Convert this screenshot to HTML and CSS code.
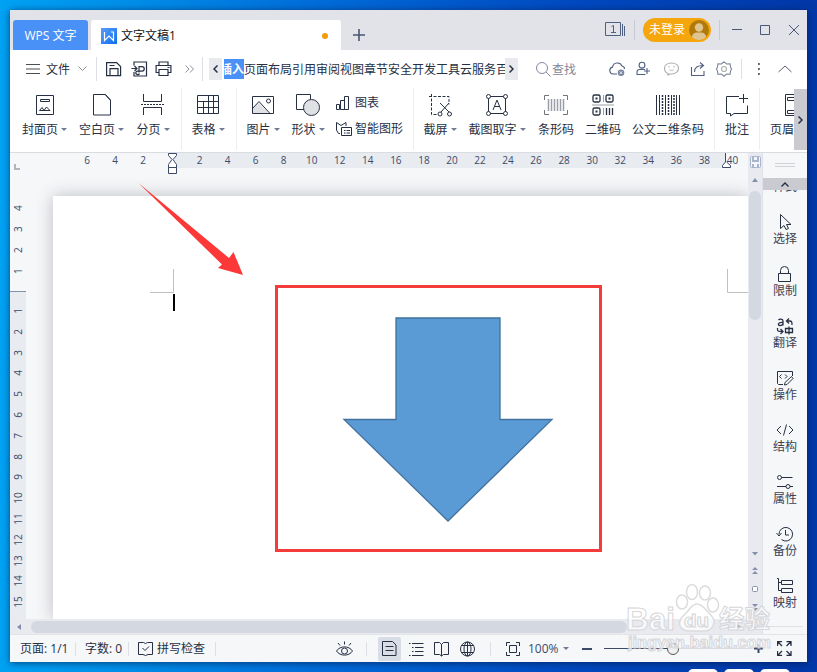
FILE: index.html
```html
<!DOCTYPE html>
<html lang="zh-CN">
<head>
  <meta charset="UTF-8">
  <meta name="viewport" content="width=device-width, initial-scale=1.0">
  <title>文字文稿1 - WPS 文字</title>
  <link rel="stylesheet" href="styles.css">
</head>
<body>
  <div class="dock"><i></i><i></i><i></i></div>
  <div class="window">

    <!-- Title bar -->
    <div class="titlebar">
      <div class="tab-home">WPS 文字</div>
      <div class="tab-doc">
        <svg width="16" height="16" viewBox="0 0 16 16"><defs><linearGradient id="lg" x1="0" y1="0" x2="1" y2="1"><stop offset="0" stop-color="#5b9cf8"/><stop offset="1" stop-color="#0d6ff0"/></linearGradient></defs><rect width="16" height="16" fill="url(#lg)"/><path d="M3.500 4v8.500L8 8l4.500 4.500V4H10" fill="none" stroke="#fff" stroke-width="1.200"/></svg>
        <span>文字文稿1</span>
        <i class="dot"></i>
      </div>
      <svg class="plus" width="12" height="12" viewBox="0 0 12 12"><path d="M6 0v12M0 6h12" stroke="#4a5570" stroke-width="1.600"/></svg>
      <div class="title-right">
        <svg width="21" height="15" viewBox="0 0 21 15" fill="none" stroke="#506080"><path d="M.5.500h15v13H.5zM17.500 2v12M19.500 4v10"/><path d="M6.500 4.500l2-1v7M6 10.500h5"/></svg>
        <i class="vline tall"></i>
        <div class="login"><span>未登录</span>
          <svg width="20" height="20" viewBox="0 0 20 20"><circle cx="10" cy="10" r="10" fill="#b07908"/><circle cx="10" cy="7.500" r="4.200" fill="#dfc48f"/><path d="M2.800 17c.4-3 2.700-4.500 4.700-4.500h5c2 0 4.300 1.500 4.700 4.500A10 10 0 0 1 2.800 17z" fill="#dfc48f"/></svg>
        </div>
        <i class="vline tall"></i>
        <svg class="winbtns" width="68" height="12" viewBox="0 0 68 12" fill="none" stroke="#47587a"><path d="M0 5.500h10M28.500 1.500h9v9h-9zM57 1l10 10M67 1L57 11"/></svg>
      </div>
    </div>

    <!-- Menu row -->
    <div class="menubar">
      <svg class="burger" width="14" height="10" viewBox="0 0 14 10"><path d="M0 .5h14M0 5h14M0 9.500h14" stroke="#4d4d55"/></svg>
      <span class="file">文件</span>
      <svg class="chev" width="9" height="6" viewBox="0 0 9 6" fill="none" stroke="#8b8f98"><path d="M.5.500l4 4 4-4"/></svg>
      <i class="vline"></i>
      <svg class="quick" width="66" height="16" viewBox="0 0 66 16" fill="none" stroke="#273043" stroke-width="1.200">
        <path d="M.6 1.600h10l4 4v9H.6zM4 14.500V7.600h8v7M3.500 4.500h5"/>
        <path d="M28 4.500V1h12.500v14H28v-4M25.500 7.500h5M28.500 5l2.500 2.500-2.500 2.500M33 11.500V5.600h3a2 2 0 0 1 0 4.500h-4a2 1.700 0 1 0 1.500 2.500"/>
        <path d="M53 4.500V1h9v3.500M52.500 11.500h-2.400v-7h14.800v7h-2.400M53 8.500h9v6h-9zM61.500 6.500h2"/>
      </svg>
      <svg class="more" width="9" height="8" viewBox="0 0 9 8" fill="none" stroke="#8b8f98"><path d="M.5.500L4 4 .5 7.500M5 .500L8.500 4 5 7.500"/></svg>
      <i class="vline"></i>
      <div class="scroll-left"><svg width="5" height="8" viewBox="0 0 5 8" fill="none" stroke="#273043" stroke-width="1.500"><path d="M4.500.500L1 4l3.500 3.500"/></svg></div>
      <div class="menu-active"><b>插入</b></div>
      <div class="menus"><span>页面布局</span><span>引用</span><span>审阅</span><span>视图</span><span>章节</span><span>安全</span><span>开发工具</span><span>云服务</span><span>百</span></div>
      <div class="scroll-right"><svg width="5" height="8" viewBox="0 0 5 8" fill="none" stroke="#273043" stroke-width="1.500"><path d="M.5.500L4 4 .5 7.500"/></svg></div>
      <svg class="search" width="15" height="15" viewBox="0 0 15 15" fill="none" stroke="#80889a"><circle cx="6" cy="6" r="5.500"/><path d="M10 10l4.500 4.500"/></svg>
      <span class="find">查找</span>
      <svg class="tools" width="124" height="16" viewBox="0 0 124 16" fill="none" stroke="#506080" stroke-width="1.100">
        <path d="M8 13H4a3.500 3.500 0 0 1-.5-6.900A5 5 0 0 1 13 5a3 3 0 0 1 2.500 3"/><circle cx="12" cy="11.700" r="3.300" fill="#7a86a0" stroke="none"/><path d="M10.700 10.400l2.600 2.600m0-2.600l-2.600 2.600" stroke="#fff" stroke-width=".8"/>
        <circle cx="33" cy="4.200" r="2.900"/><path d="M36 8.500h-5.500a2.500 2.500 0 0 0-2.500 2.500v2.500h8.500M38 7v6M35 10h6"/>
        <path d="M59 12.500c-2-.8-3.500-2.800-3.500-5C55.500 4 58.500 2 62.500 2S69.500 4 69.500 7.200 66.500 13 62.500 13h-1.500l-2 1z" stroke="#aaa"/><path d="M60 4.800v1.700M65 4.800v1.700M60.500 8.700c1 1 3 1 4 0" stroke="#aaa" stroke-width=".9"/>
        <path d="M82.500 6v8.500h12.500v-4.500M85.500 11c0-4.500 3-6.500 8.500-6.500M91 1.500l3.500 3-3.500 3"/>
        <path d="M115 .8l2.600 2.200 3.500-.2.500 3.600 1 1.600-1 1.600-.5 3.600-3.500-.2L115 15.200l-2.600-2.200-3.500.2-.5-3.600-1-1.600 1-1.600.5-3.600 3.500.2z" stroke="#7d8798"/><circle cx="115" cy="8" r="2.500" stroke="#aaa"/>
      </svg>
      <i class="vline v-last"></i>
      <svg class="kebab" width="28" height="12" viewBox="0 0 28 12"><path d="M0 0h1.800v2H0zM0 5h1.800v2H0zM0 10h1.800v2H0z" fill="#59606e"/><path d="M20.500 9l6.500-6 6.500 6" fill="none" stroke="#59606e"/></svg>
    </div>

    <!-- Ribbon -->
    <div class="ribbon">
      <div class="cmd w57"><svg width="24" height="24" viewBox="0 0 24 24"><path class="s" d="M3.500 2.500h17v19h-17zM7.500 6.500h9v2h-9z"/><path class="s" d="M6.500 17.500l2.500-3 2 3 2.500-3.500 3.500 3.500z"/></svg><span>封面页<em></em></span></div>
      <div class="cmd w57"><svg width="24" height="24" viewBox="0 0 24 24"><path class="s" d="M3.500 1.500h12l5 5.500v15h-17zM15 1.500l5.500 6"/></svg><span>空白页<em></em></span></div>
      <div class="cmd w46"><svg width="24" height="24" viewBox="0 0 24 24"><path class="s" d="M2.500 1v7.500h18V1M2.500 22v-7.500h18V22"/><path class="s" d="M0 11.500h23" stroke-dasharray="2 1"/></svg><span>分页<em></em></span></div>
      <i class="sep s5"></i>
      <div class="cmd w46"><svg width="24" height="24" viewBox="0 0 24 24"><path class="s" d="M1.500 2.500h21v18h-21zM1.500 8.500h21M1.500 14.500h21M7.500 8.500v12M12.500 2.500v18M17.500 2.500v18"/></svg><span>表格<em></em></span></div>
      <i class="sep s5"></i>
      <div class="cmd w46"><svg width="24" height="24" viewBox="0 0 24 24"><path d="M1.500 15.500l6-6 9 9v2h-15z" fill="#dfe1e5"/><path class="s" d="M1.500 3.500h21v17h-21zM1.500 15.500l6.500-7L19 20.500"/><circle class="s" cx="17.500" cy="8" r="2"/></svg><span>图片<em></em></span></div>
      <div class="cmd w44"><svg width="24" height="24" viewBox="0 0 24 24"><path class="s" d="M.5 1.500h14v15H.5z"/><circle class="s tint" cx="15.500" cy="14.500" r="8"/></svg><span>形状<em></em></span></div>
      <div class="stack">
        <div><svg width="16" height="16" viewBox="0 0 16 16"><path class="s" d="M.5 9.500h3v5h-3zM4.500 5.500h4v9h-4zM8.500 1.500h4v13h-4z"/></svg>图表</div>
        <div><svg width="16" height="16" viewBox="0 0 16 16"><path class="s" d="M4 12.500H2.500L.5 9V1.500l4.500 3 5-3V5"/><path class="s" d="M5.500 6.500h10v8h-10zM8 9.500h1.500M10.500 9.500H14M8 12h1.500M10.500 12H14"/></svg>智能图形</div>
      </div>
      <i class="sep"></i>
      <div class="cmd w46 first"><svg width="24" height="24" viewBox="0 0 24 24"><path class="s" d="M1 3.500h20v8" stroke-dasharray="3 1.500"/><path class="s" d="M3.500 1v20.500h6" stroke-dasharray="3 1.500"/><path class="s" d="M12 10l9 9M21 10l-8 9"/><circle class="s" cx="12" cy="21" r="2"/><circle class="s" cx="21.500" cy="21" r="2"/></svg><span>截屏<em></em></span></div>
      <div class="cmd w68"><svg width="24" height="24" viewBox="0 0 24 24"><path class="s" d="M3.500 3.500h17v17h-17z"/><g class="s" fill="#fff"><circle cx="3.500" cy="3.500" r="2"/><circle cx="20.500" cy="3.500" r="2"/><circle cx="3.500" cy="20.500" r="2"/><circle cx="20.500" cy="20.500" r="2"/></g><path class="s" d="M8 17l4-10 4 10M9.500 13.500h5"/></svg><span>截图取字<em></em></span></div>
      <div class="cmd w50"><svg width="24" height="24" viewBox="0 0 24 24"><path d="M.5 7V2.500H5M19 2.500h4.500V7M.5 17v4.500H5M19 21.500h4.500V17" fill="none" stroke="#70757e"/><path d="M4.500 6v12M7.500 6v12M10.500 6v12M13.500 6v12M16.500 6v12M19.500 6v12" stroke="#999ea7" stroke-width="1.500"/></svg><span>条形码</span></div>
      <div class="cmd w44"><svg width="24" height="24" viewBox="0 0 24 24"><g class="s thick"><rect x="2" y="2" width="7" height="7" rx="1.500"/><rect x="15" y="2" width="7" height="7" rx="1.500"/><rect x="2" y="15" width="7" height="7" rx="1.500"/><path d="M15.500 15v7M18.500 15v7M21.500 15v7"/></g><path d="M4.500 4.500h2v2h-2zM17.500 4.500h2v2h-2zM4.500 17.500h2v2h-2z" fill="#273043"/><path d="M1 12h22M12.500 2v7" stroke="#9a9ea6"/><path d="M12.500 15v7" stroke="#9a9ea6"/></svg><span>二维码</span></div>
      <div class="cmd w86"><svg width="24" height="24" viewBox="0 0 24 24"><path class="s" d="M.5 2v20M3.500 2v20M9.500 2v20M15.500 2v20M20.500 2v20M23.500 2v20"/><path d="M6.500 2v20M12.500 2v20M18 2v20" stroke="#273043" stroke-width="1.500" stroke-dasharray="2 1"/></svg><span>公文二维条码</span></div>
      <i class="sep s3"></i>
      <div class="cmd w44"><svg width="24" height="24" viewBox="0 0 24 24"><path class="s" d="M14 3.500H1.500v17h4V23l3.500-2.500h13.500v-8M18.500 1v9M14 5.500h9"/></svg><span>批注</span></div>
      <i class="sep"></i>
      <div class="cmd clipped"><svg width="24" height="24" viewBox="0 0 24 24"><path class="s" d="M22 1.500H7.500v21H22M24 4.500H9.500v3H24M24 17.500H9.500v3H24"/></svg><span>页眉页脚</span></div>
      <div class="ribbon-next"><svg width="5" height="8" viewBox="0 0 5 8" fill="none" stroke="#273043" stroke-width="1.500"><path d="M.5.500L4 4 .5 7.500"/></svg></div>
    </div>

    <!-- Work area -->
    <div class="work">
      <div class="editor">
        <div class="hruler">
          <div class="margin-nums"><b>6</b><b>4</b><b>2</b></div>
          <div class="nums"><b></b><b>2</b><b>4</b><b>6</b><b>8</b><b>10</b><b>12</b><b>14</b><b>16</b><b>18</b><b>20</b><b>22</b><b>24</b><b>26</b><b>28</b><b>30</b><b>32</b><b>34</b><b>36</b><b>38</b><b>40</b></div>
          <svg class="indent" width="10" height="23" viewBox="0 0 10 23" fill="#fff" stroke="#3c4a68"><path d="M.5.500h8v2L5 6.500l3.500 5v3h-8v-3L4 6.500.5 2.500zM.5 14.500h8v6h-8z"/></svg>
          <svg class="indent-right" width="10" height="16" viewBox="0 0 10 16" fill="#fff" stroke="#3c4a68"><path d="M3.500 0v9L.5 12.500v2h8v-2L4.500 9"/></svg>
        </div>
        <div class="canvas">
          <div class="vruler">
            <i class="corner"></i>
            <div class="vtop"><b>4</b><b>3</b><b>2</b><b>1</b></div>
            <div class="vmain"><b>1</b><b>2</b><b>3</b><b>4</b><b>5</b><b>6</b><b>7</b><b>8</b><b>9</b><b>10</b><b>11</b><b>12</b><b>13</b><b>14</b><b>15</b></div>
          </div>
          <div class="sheet-area">
            <div class="sheet">
              <svg class="drawing" width="695" height="423" viewBox="53 196 695 423">
                <path d="M150 292.500h23.500V269M748 292.500h-20.500V269" fill="none" stroke="#c0c0c0"/>
                <path d="M173 294h2v17h-2z" fill="#000"/>
                <rect x="276.500" y="286.500" width="324" height="264" fill="none" stroke="#f63b3b" stroke-width="3"/>
                <path d="M396 318h104v101.500h52L448 521 344 419.500h52z" fill="#5b9bd5" stroke="#41719c" stroke-width="1.300"/>
              </svg>
            </div>
          </div>
        </div>
        <div class="hscroll"><svg width="4" height="6" viewBox="0 0 4 6"><path d="M4 0v6L0 3z" fill="#8490aa"/></svg><i></i><svg class="right" width="4" height="6" viewBox="0 0 4 6"><path d="M0 0v6l4-3z" fill="#8490aa"/></svg></div>
      </div>
      <div class="vscroll">
        <svg width="11" height="12" viewBox="0 0 11 12"><rect x=".5" y=".5" width="10" height="11" rx="1" fill="#f4f6fb" stroke="#a9b4cd"/><path d="M2 1h2v3h3V1h2v5H2zM2 8h2v3H2zM7 8h2v3H7z" fill="#a9b4cd"/></svg>
        <svg class="up" width="6" height="4" viewBox="0 0 6 4"><path d="M0 4h6L3 0z" fill="#8490aa"/></svg>
        <i></i>
        <svg class="pager" width="8" height="62" viewBox="0 0 8 62"><path d="M1 1h6L4 4.500zM1 19h6L4 16zM1 23h6L4 20zM1 53h6L4 56zM1 57h6L4 60z" fill="#8490aa"/><rect x="1.500" y="35.500" width="5" height="5" rx="1" fill="#fff" stroke="#8490aa"/></svg>
      </div>
      <div class="sidebar">
        <div class="grip"></div>
        <div class="side-up"><svg width="8" height="5" viewBox="0 0 8 5" fill="none" stroke="#273043" stroke-width="1.400"><path d="M.5 4.500L4 1l3.500 3.500"/></svg></div>
        <div class="side-cut"><span>样式</span></div>
        <div class="tool"><svg width="18" height="18" viewBox="0 0 18 18"><path class="s" d="M4.500 1.500v14l3.500-3 2 4 2.500-1-2-4h4.500z"/></svg>选择</div>
        <div class="tool"><svg width="18" height="18" viewBox="0 0 18 18"><path class="s" d="M2.500 8.500h12v8h-12zM4.500 8.500v-3a4 4 0 0 1 8 0v3"/></svg>限制</div>
        <div class="tool"><svg width="18" height="18" viewBox="0 0 18 18"><path class="s thick" d="M2.500 3c1-1.300 4.500-1.300 4.500 1v4.500M7 5.500c-5.500-.5-5.500 3-3 3 2 0 3-1 3-2.500M11 4h2.500c2.500 0 2.500 1.500 2.500 4M13 1.500L10.500 4 13 6.500M1.500 11v1.500c0 2 1 2 5 2M4.500 12l2.500 2.500L4.500 17M9.500 11.500h7v4h-7zM13 9.500v8"/></svg>翻译</div>
        <div class="tool"><svg width="18" height="18" viewBox="0 0 18 18"><path class="s" d="M16.500 7V2.500H1.500v12l1 1H7M5.500 5.500l-2 2 2 2M9 5.500l2 2-2 2M15.500 7.500l1.500 2-6 6-2.500.500.500-2.500z"/></svg>操作</div>
        <div class="tool"><svg width="18" height="18" viewBox="0 0 18 18"><path class="s" d="M5 5L1 9l4 4M13 5l4 4-4 4M10.500 3.500l-3 11"/></svg>结构</div>
        <div class="tool"><svg width="18" height="18" viewBox="0 0 18 18"><path class="s" d="M5.500 4.500h11M1 13.500h9M14 13.500h3"/><circle class="s" cx="3.500" cy="4.500" r="2"/><circle class="s" cx="12" cy="13.500" r="2"/></svg>属性</div>
        <div class="tool"><svg width="18" height="18" viewBox="0 0 18 18"><path class="s" d="M3 9.500a6.800 6.800 0 1 1 2.500 5M.5 8L3 11l2.500-3M9.500 5v5H13"/></svg>备份</div>
        <div class="tool"><svg width="18" height="18" viewBox="0 0 18 18"><path class="s" d="M1 1.500h1.500v12h3M2.500 5.500h3M5.500 3.500h11v4h-11zM5.500 11.500h11v4h-11z"/></svg>映射</div>
        <div class="side-end"></div>
      </div>
    </div>

    <!-- Status bar -->
    <div class="status">
      <span class="pages">页面: 1/1</span><i class="vline"></i>
      <span class="words">字数: 0</span><i class="vline"></i>
      <svg width="15" height="14" viewBox="0 0 15 14"><path class="s" d="M5.500.500h-5v12h4.500l2.500 1 2.500-1h4.500V.5h-5M5.500.500l2 1 2-1M4.500 6l2.500 2.500L11 4.500"/></svg>
      <span class="spell">拼写检查</span><i class="vline v-spell"></i>
      <svg class="eye" width="17" height="16" viewBox="0 0 17 16"><path class="s" d="M.5 10C4 4.500 13 4.500 16.500 10 13 15.500 4 15.500.5 10zM8.500.500v3M2 2l2 2.500M15 2l-2 2.500"/><circle class="s" cx="8.500" cy="10" r="3"/></svg>
      <i class="vline v-eye"></i>
      <div class="view-on"><svg width="15" height="15" viewBox="0 0 15 15"><path class="s" d="M.5.500h10l3.500 3.500v10.500H.5zM3.500 5.500h8M3.500 9.500h8"/></svg></div>
      <svg class="views" width="68" height="16" viewBox="0 0 68 16"><path class="s" d="M0 2.500h1.500M3 2.500h11.500M3 6.500h1.500M6 6.500h8.500M3 10.500h1.500M6 10.500h8.500M0 14.500h1.500M3 14.500h11.500M32.500 3.500l-2-2h-5v12h5l2 1.500 2-1.500h5v-12h-5zV15"/><circle class="s" cx="58.500" cy="8" r="7"/><ellipse class="s" cx="58.500" cy="8" rx="3.500" ry="7"/><path class="s" d="M58.500 1v14M52.500 4.500h12M52.500 11.500h12"/></svg>
      <i class="vline v-views"></i>
      <svg class="fit" width="14" height="14" viewBox="0 0 14 14"><path class="s" d="M.5 4V.5H4M10 .5h3.500V4M.5 10v3.500H4M10 13.500h3.500V10M3.500 3.500h7v7h-7z"/></svg>
      <span class="zoom">100%<em></em></span>
      <i class="minus"></i>
      <div class="slider"><i></i></div>
      <svg class="zplus" width="9" height="9" viewBox="0 0 9 9"><path d="M4.500 0v9M0 4.500h9" stroke="#3c4a68" stroke-width="2"/></svg>
      <svg class="full" width="15" height="15" viewBox="0 0 15 15"><path class="s thick" d="M.5 5V.5H5M.5.500l4.500 4.500M9.500.500H14V5M14 .500L9.500 5M.5 10v4.500H5M.5 14.500L5 10M14 10v4.500H9.500M14 14.500L9.500 10"/></svg>
    </div>
  </div>

  <!-- Callout arrow -->
  <svg class="callout" width="106" height="94" viewBox="138 182 106 94"><path d="M138.500 183L229 258l4.500-6L243 275l-25-7 4-3.500z" fill="#fc3938"/></svg>

  <!-- Watermark -->
  <svg class="watermark" width="160" height="78" viewBox="625 582 160 78">
    <g fill="#fff" fill-opacity=".7" stroke="#dcdcde" stroke-width="1.500">
      <ellipse cx="682" cy="602" rx="5.500" ry="7"/><ellipse cx="692" cy="592" rx="5.500" ry="7.500"/><ellipse cx="705" cy="593" rx="5.500" ry="7"/><ellipse cx="713" cy="605" rx="5.500" ry="7"/>
      <path d="M697 604c5 0 8 5 11 8 5 5 8 9 5 14-3 6-8 5-16 5s-14 1-17-5c-2-5 2-9 7-14 3-3 5-8 10-8z"/>
    </g>
    <g class="wm-text">
      <text x="626" y="630" font-size="32" textLength="49" lengthAdjust="spacingAndGlyphs">Bai</text>
      <text x="684" y="627" font-size="19" textLength="25" lengthAdjust="spacingAndGlyphs">du</text>
      <text x="719" y="628" font-size="25" textLength="51" lengthAdjust="spacingAndGlyphs">经验</text>
      <text x="628" y="648" font-size="16" textLength="143" lengthAdjust="spacingAndGlyphs">jingyan.baidu.com</text>
    </g>
  </svg>
</body>
</html>
```
FILE: styles.css
```css
* { box-sizing: border-box; }
body { position: relative; margin: 0; padding: 10px; width: 817px; height: 672px; overflow: hidden; font: 12px/16px "Open Sans", "Noto Sans CJK SC", sans-serif; color: #273043; background: linear-gradient(90deg, #00a2f4 0, #008fe9 15%, #006bd9 40%, #0049c0 70%, #0238a8 100%); }
svg { display: block; flex: none; }
i, em { font-style: normal; flex: none; }
.s { fill: none; stroke: #273043; stroke-width: 1; }
.s[fill="#fff"] { fill: #fff; }
.thick { stroke-width: 1.300; }
.tint { fill: #dfe1e5; }
.window { width: 797px; height: 652px; background: #fff; box-shadow: 0 1px 7px rgba(0, 20, 60, .65); display: flex; flex-direction: column; white-space: nowrap; }
.vline { width: 1px; height: 24px; background: #dcdfe5; }
.vline.tall { height: 20px; background: #c8cbd1; }

/* title bar */
.titlebar { height: 40px; background: #e1e3e8; display: flex; align-items: flex-end; padding-left: 3px; }
.tab-home { width: 75px; height: 30px; line-height: 31px; background: #4a91f7; color: #fff; text-align: center; border-radius: 3px 3px 0 0; }
.tab-doc { width: 250px; height: 30px; margin-left: 3px; padding: 1px 13px 0 10px; background: #fff; color: #111; border-radius: 3px 3px 0 0; display: flex; align-items: center; gap: 4px; }
.tab-doc span { flex: 1; }
.dot { width: 6px; height: 6px; border-radius: 3px; background: #f39b0b; }
.plus { margin: 0 0 9px 12px; }
.title-right { height: 40px; margin-left: auto; padding-right: 7px; display: flex; align-items: center; }
.title-right > .vline { margin: 0 8px; }
.title-right > svg:first-child { margin-top: -2px; }
.login { width: 68px; height: 24px; border-radius: 12px; background: #f5a60d; color: #fff; display: flex; align-items: center; justify-content: space-between; padding: 0 2px 0 6px; }
.winbtns { margin-left: 4px; }

/* menu row */
.menubar { height: 38px; display: flex; align-items: center; padding-left: 16px; }
.file { margin-left: 6px; width: 32px; }
.file, .menus, .find { padding-top: 1px; }
.chev { margin-right: 9px; }
.quick { margin: 0 13px 0 9px; }
.more { margin-right: 8px; }
.scroll-left, .scroll-right { width: 13px; height: 22px; background: #e8eaee; display: flex; align-items: center; justify-content: center; }
.scroll-left { margin-left: 6px; }
.menu-active { width: 20px; height: 20px; margin-left: 2px; overflow: hidden; background: #4a91f7; color: #fff; line-height: 21px; }
.menu-active b { margin-left: -4px; }
.menus { width: 261px; overflow: hidden; display: flex; }
.menus span { flex: none; }
.search { margin-left: 18px; }
.find { margin-left: 1px; color: #80889a; width: 57px; }
.tools { margin-right: 8px; }
.v-last { height: 20px; margin-right: 16px; }
.kebab { overflow: visible; }

/* ribbon */
.ribbon { height: 64px; display: flex; align-items: flex-start; padding-left: 6px; }
.cmd { flex: none; padding-top: 5px; display: flex; flex-direction: column; align-items: center; gap: 5px; }
.cmd em, .zoom em { display: inline-block; margin-left: 3px; vertical-align: 3px; border: 3px solid transparent; border-top: 3px solid #6f7b93; border-bottom: 0; }
.w57 { width: 57px; }
.w46 { width: 46px; }
.w44 { width: 44px; }
.w50 { width: 50px; }
.w68 { width: 68px; }
.w86 { width: 86px; }
.sep { width: 1px; height: 62px; background: #eceef1; }
.s5 { margin: 0 3px 0 5px; }
.s3 { margin-left: 3px; }
.first { margin-left: 3px; }
.stack { width: 83px; padding: 7px 0 0 6px; display: flex; flex-direction: column; gap: 10px; }
.stack div { display: flex; gap: 3px; }
.clipped { width: 32px; margin-left: 2px; padding-left: 8px; overflow: hidden; align-items: flex-start; }
.clipped svg { margin-left: 8px; }
.ribbon-next { width: 13px; height: 61px; margin-top: 1px; background: #c9cbd1; display: flex; align-items: center; justify-content: center; }

/* work area */
.work { height: 482px; display: flex; background: #f5f7f9; border-top: 1px solid #d9dce1; }
.editor { width: 738px; display: flex; flex-direction: column; }
.hruler { position: relative; height: 15px; padding-left: 63px; display: flex; font-size: 10px; line-height: 14px; color: #3c4a68; }
.hruler b, .vruler b { font-weight: normal; }
.hruler b { flex: none; width: 28.050px; text-align: center; }
.margin-nums { display: flex; width: 99px; }
.nums { display: flex; width: 554px; background: #e8ebf0; }
.nums b:first-child { width: 13.500px; }
.nums b:last-child { margin-right: -10px; }
.indent { position: absolute; left: 158px; top: 0; }
.indent-right { position: absolute; left: 712px; top: 0; }
.canvas { height: 451px; display: flex; }
.vruler { width: 16px; font-size: 10px; color: #3c4a68; display: flex; flex-direction: column; }
.vruler b { height: 20.900px; writing-mode: vertical-rl; transform: rotate(180deg); text-align: center; width: 16px; line-height: 16px; }
.corner { width: 6px; height: 6px; margin: -4px 0 0 4px; border: solid #b3b4bf; border-width: 0 0 2px 2px; }
.vtop { padding-top: 28px; height: 121px; display: flex; flex-direction: column; }
.vmain { flex: 1; border-top: 1px solid #8292ab; background: #e8ebf0; padding-top: 9px; display: flex; flex-direction: column; overflow: hidden; }
.vmain b { flex: none; height: 20.800px; }
.sheet-area { flex: 1; padding: 28px 0 0 27px; overflow: hidden; }
.sheet { height: 423px; background: #fff; box-shadow: 0 0 16px rgba(60, 60, 70, .3); }
.hscroll { height: 15px; background: #e8eaf0; display: flex; align-items: center; padding-left: 7px; }
.hscroll i { width: 596px; height: 12px; margin-left: 10px; border-radius: 6px; background: #d4d8e0; }
.hscroll .right { margin-left: 110px; }
.vscroll { width: 15px; background: #e8eaf0; border-right: 1px solid #dfe1e8; display: flex; flex-direction: column; align-items: center; padding-top: 3px; }
.vscroll .up { margin-top: 10px; }
.vscroll i { width: 12px; height: 129px; margin-top: 9px; border-radius: 6px; background: #d4d8e0; }
.pager { margin-top: 231px; }

/* right side panel */
.sidebar { width: 44px; color: #3c4254; padding-top: 10px; }
.grip { width: 20px; height: 4px; margin: 0 auto; border: solid #d0d2d7; border-width: 1px 0; }
.side-up { height: 12px; margin-top: 11px; background: #c9cbd1; display: flex; align-items: center; justify-content: center; }
.side-cut { height: 4px; overflow: hidden; text-align: center; }
.side-cut span { display: block; margin-top: -11px; }
.tool { height: 52px; padding-top: 19px; display: flex; flex-direction: column; align-items: center; line-height: 16px; }
.side-end { width: 40px; height: 1px; margin-top: 16px; background: #dfe1e5; }

/* status bar */
.status { height: 28px; background: #f5f7f9; border-top: 1px solid #e2e4e8; display: flex; align-items: center; padding-left: 10px; }
.status .vline { height: 14px; }
.pages { width: 55px; }
.words { width: 43px; margin-left: 9px; }
.status .vline + svg { margin-left: 9px; }
.spell { margin-left: 4px; width: 58px; }
.status .v-spell + .eye { margin-left: 120px; }
.v-eye { margin-left: 13px; }
.view-on { width: 23px; height: 24px; margin-left: 11px; background: #d9dee6; border-radius: 2px; display: flex; align-items: center; justify-content: center; }
.views { margin-left: 8px; }
.v-views { margin-left: 13px; }
.status .v-views + .fit { margin-left: 15px; }
.zoom { margin-left: 8px; width: 54px; color: #3c4a68; }
.zoom em { margin-left: 4px; }
.minus { width: 10px; height: 2px; background: #3c4a68; }
.slider { width: 147px; height: 1px; margin-left: 12px; background: linear-gradient(90deg, #3c4a68 50%, #dadde4 50%); display: flex; align-items: center; }
.slider i { width: 12px; height: 12px; margin-left: 63px; border: 1px solid #555; border-radius: 6px; background: #f0f0f0; }
.zplus { margin-left: 3px; }
.full { margin-left: 14px; }

/* overlays */
.callout { position: absolute; left: 138px; top: 182px; }
.watermark { position: absolute; left: 625px; top: 582px; }
.wm-text { font-family: "Liberation Sans", "Noto Sans CJK SC", sans-serif; font-weight: bold; fill: #fff; fill-opacity: .7; stroke: #d6d6d9; stroke-width: 1; }
.dock { position: absolute; left: 688px; top: 669px; display: flex; gap: 6px; }
.dock i { width: 30px; height: 10px; border-radius: 10px; background: #fff; }
```
